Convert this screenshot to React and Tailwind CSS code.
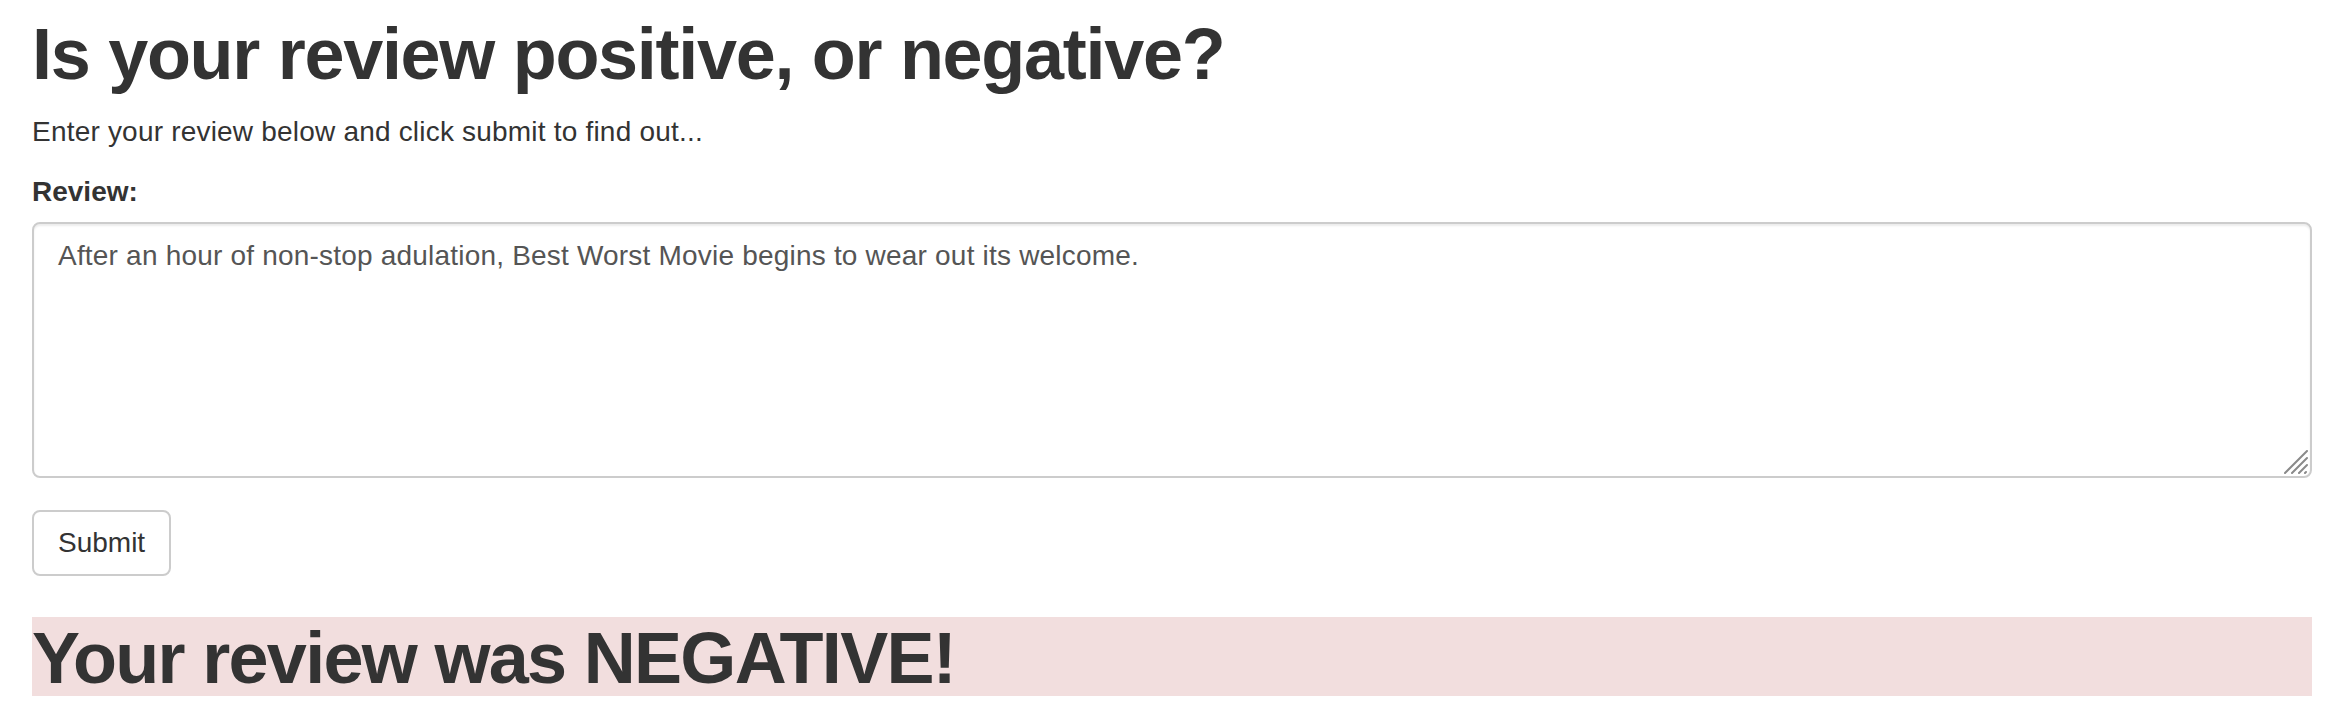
import { useState } from 'react';

const ResizeGrip = () => (
  <svg
    className="absolute right-[4px] bottom-[4px] w-[24px] h-[24px] pointer-events-none"
    viewBox="0 0 24 24"
    fill="none"
    stroke="#8a8a8a"
    strokeWidth="2"
    strokeLinecap="round"
  >
    <line x1="1" y1="23" x2="23" y2="1" />
    <line x1="8" y1="23" x2="23" y2="8" />
    <line x1="15" y1="23" x2="23" y2="15" />
    <line x1="21" y1="23" x2="22" y2="22" />
  </svg>
);

const App = () => {
  const [review, setReview] = useState(
    'After an hour of non-stop adulation, Best Worst Movie begins to wear out its welcome.'
  );

  return (
    <div className="min-h-screen bg-white pl-[32px] pr-[34px] pt-[15px] text-[#333] font-['Liberation_Sans',Arial,sans-serif]">
      <h1 className="text-[72px] leading-[79px] font-bold tracking-[-1.3px]">
        Is your review positive, or negative?
      </h1>
      <p className="mt-[18px] text-[28px] leading-[40px] tracking-[0.2px]">
        Enter your review below and click submit to find out...
      </p>
      <form onSubmit={(e) => e.preventDefault()}>
        <label htmlFor="review" className="block mt-[20px] mb-[10px] text-[28px] leading-[40px] font-bold">
          Review:
        </label>
        <div className="relative">
          <textarea
            id="review"
            value={review}
            onChange={(e) => setReview(e.target.value)}
            className="block w-full h-[256px] border-2 border-[#ccc] rounded-[8px] px-[24px] py-[12px] text-[28px] leading-[40px] tracking-[0.2px] text-[#555] bg-white shadow-[inset_0_2px_2px_rgba(0,0,0,0.075)] outline-none resize-none"
          />
          <ResizeGrip />
        </div>
        <button
          type="submit"
          className="mt-[32px] flex items-center h-[66px] px-[24px] border-2 border-[#ccc] rounded-[8px] bg-white text-[28px] leading-[40px] text-[#333]"
        >
          Submit
        </button>
      </form>
      <h1 className="mt-[41px] h-[79px] pt-[3px] bg-[#f2dede] text-[72px] leading-[76px] font-bold tracking-[-1.7px]">
        Your review was NEGATIVE!
      </h1>
    </div>
  );
};

export default App;
